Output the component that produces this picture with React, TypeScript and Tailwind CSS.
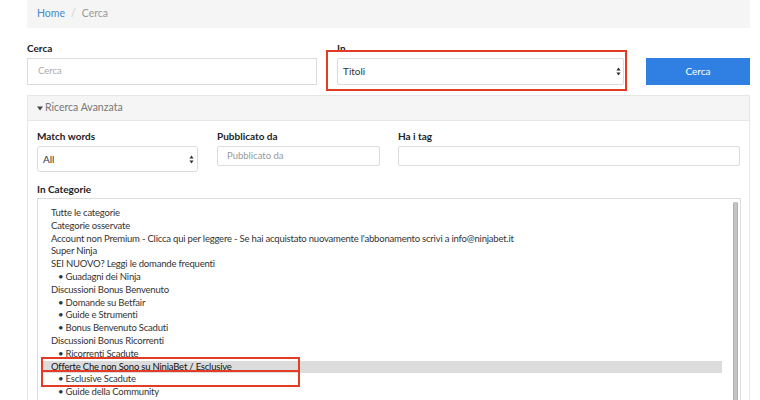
import React from "react";

const font = { fontFamily: "Lato, 'Noto Sans', sans-serif" };

function Arrows({ className = "" }: { className?: string }) {
  return (
    <svg width="5" height="9" viewBox="0 0 5 9" className={className}>
      <path d="M2.5 0.5 L4.6 3.6 L0.4 3.6 Z" fill="#333" />
      <path d="M2.5 8.5 L4.6 5.4 L0.4 5.4 Z" fill="#333" />
    </svg>
  );
}

const items: { t: string; sub?: boolean; sel?: boolean }[] = [
  { t: "Tutte le categorie" },
  { t: "Categorie osservate" },
  { t: "Account non Premium - Clicca qui per leggere - Se hai acquistato nuovamente l'abbonamento scrivi a info@ninjabet.it" },
  { t: "Super Ninja" },
  { t: "SEI NUOVO? Leggi le domande frequenti" },
  { t: "Guadagni dei Ninja", sub: true },
  { t: "Discussioni Bonus Benvenuto" },
  { t: "Domande su Betfair", sub: true },
  { t: "Guide e Strumenti", sub: true },
  { t: "Bonus Benvenuto Scaduti", sub: true },
  { t: "Discussioni Bonus Ricorrenti" },
  { t: "Ricorrenti Scadute", sub: true },
  { t: "Offerte Che non Sono su NinjaBet / Esclusive", sel: true },
  { t: "Esclusive Scadute", sub: true },
  { t: "Guide della Community", sub: true },
];

export default function App() {
  return (
    <div className="w-[760px] h-[400px] overflow-hidden bg-white text-[#333]" style={font}>
      <div className="pl-[27px] pr-[10px]">
        {/* breadcrumb */}
        <div className="h-[28px] bg-[#f5f5f5] flex items-center pl-[10px] text-[10.5px]">
          <span className="text-[#428bca]">Home</span>
          <span className="text-[#ccc] px-[6px]">/</span>
          <span className="text-[#999]">Cerca</span>
        </div>

        {/* search row */}
        <div className="flex mt-[14px]">
          <div className="w-[290px]">
            <div className="h-[12px] leading-[12px] text-[10px] font-bold text-[#222]">Cerca</div>
            <div className="mt-[4px] h-[27px] border border-[#dcdcdc] flex items-center pl-[10px] text-[9.5px] text-[#aaa]">
              Cerca
            </div>
          </div>
          <div className="w-[287px] ml-[20px] relative">
            <div className="h-[12px] leading-[12px] text-[10px] font-bold text-[#222]">In</div>
            <div className="mt-[4px] h-[27px] border border-[#dcdcdc] rounded-[2px] flex items-center justify-between pl-[5px] pr-[2px] text-[10px] text-[#333]">
              <span>Titoli</span>
              <Arrows />
            </div>
            <div className="absolute left-[-11px] top-[8px] w-[301px] h-[41px] border-2 border-[#e23b26]"></div>
          </div>
          <div className="w-[104px] ml-[22px] pt-[16px]">
            <div className="h-[27px] bg-[#2f80e2] flex items-center justify-center text-[10px] text-white">Cerca</div>
          </div>
        </div>

        {/* advanced panel */}
        <div className="mt-[10px] border border-[#e6e6e6] h-[400px]">
          <div className="h-[25px] bg-[#f5f5f5] border-b border-[#e6e6e6] flex items-center pl-[9px] text-[10.5px] text-[#777]">
            <svg width="6" height="5" viewBox="0 0 6 5" className="mr-[2px]">
              <path d="M0 0.5 H6 L3 4.5 Z" fill="#444" />
            </svg>
            <span>Ricerca Avanzata</span>
          </div>
          <div className="pl-[9px] pr-[9px]">
            <div className="flex mt-[9px]">
              <div className="w-[161px]">
                <div className="h-[12px] leading-[12px] text-[10px] font-bold text-[#222]">Match words</div>
                <div className="mt-[4px] h-[26px] border border-[#dcdcdc] rounded-[3px] flex items-center justify-between pl-[5px] pr-[3px] text-[10px]">
                  <span>All</span>
                  <Arrows />
                </div>
              </div>
              <div className="w-[163px] ml-[19px]">
                <div className="h-[12px] leading-[12px] text-[10px] font-bold text-[#222]">Pubblicato da</div>
                <div className="mt-[4px] h-[20px] border border-[#dcdcdc] rounded-[2px] flex items-center pl-[9px] text-[9.5px] text-[#999]">
                  Pubblicato da
                </div>
              </div>
              <div className="w-[342px] ml-[18px]">
                <div className="h-[12px] leading-[12px] text-[10px] font-bold text-[#222]">Ha i tag</div>
                <div className="mt-[4px] h-[20px] border border-[#dcdcdc] rounded-[2px]"></div>
              </div>
            </div>

            <div className="mt-[11px] h-[12px] leading-[12px] text-[10px] font-bold text-[#222]">In Categorie</div>
            <div className="mt-[3px] w-[704px] h-[260px] border border-[#dcdcdc] relative overflow-hidden">
              <div className="pt-[8px] pl-[3px] pr-[18px] text-[9.5px] leading-[12.8px] tracking-[-0.2px] text-[#333]">
                {items.map((it, i) => (
                  <div
                    key={i}
                    className={
                      "whitespace-nowrap " +
                      (it.sub ? "pl-[17px] " : "pl-[10px] ") +
                      (it.sel ? "bg-[#dcdcdc] text-[#111]" : "")
                    }
                  >
                    {it.sub ? "• " + it.t : it.t}
                  </div>
                ))}
              </div>
              <div className="absolute right-[2px] top-[3px] w-[5px] h-[240px] rounded-[2px] bg-[#c4c4c4] border-x border-[#b0b0b0]"></div>
              <div className="absolute left-[3px] top-[158px] w-[259px] h-[15px] border-2 border-[#e23b26]"></div>
              <div className="absolute left-[3px] top-[171px] w-[259px] h-[17px] border-2 border-[#e23b26]"></div>
            </div>
          </div>
        </div>
      </div>
    </div>
  );
}
